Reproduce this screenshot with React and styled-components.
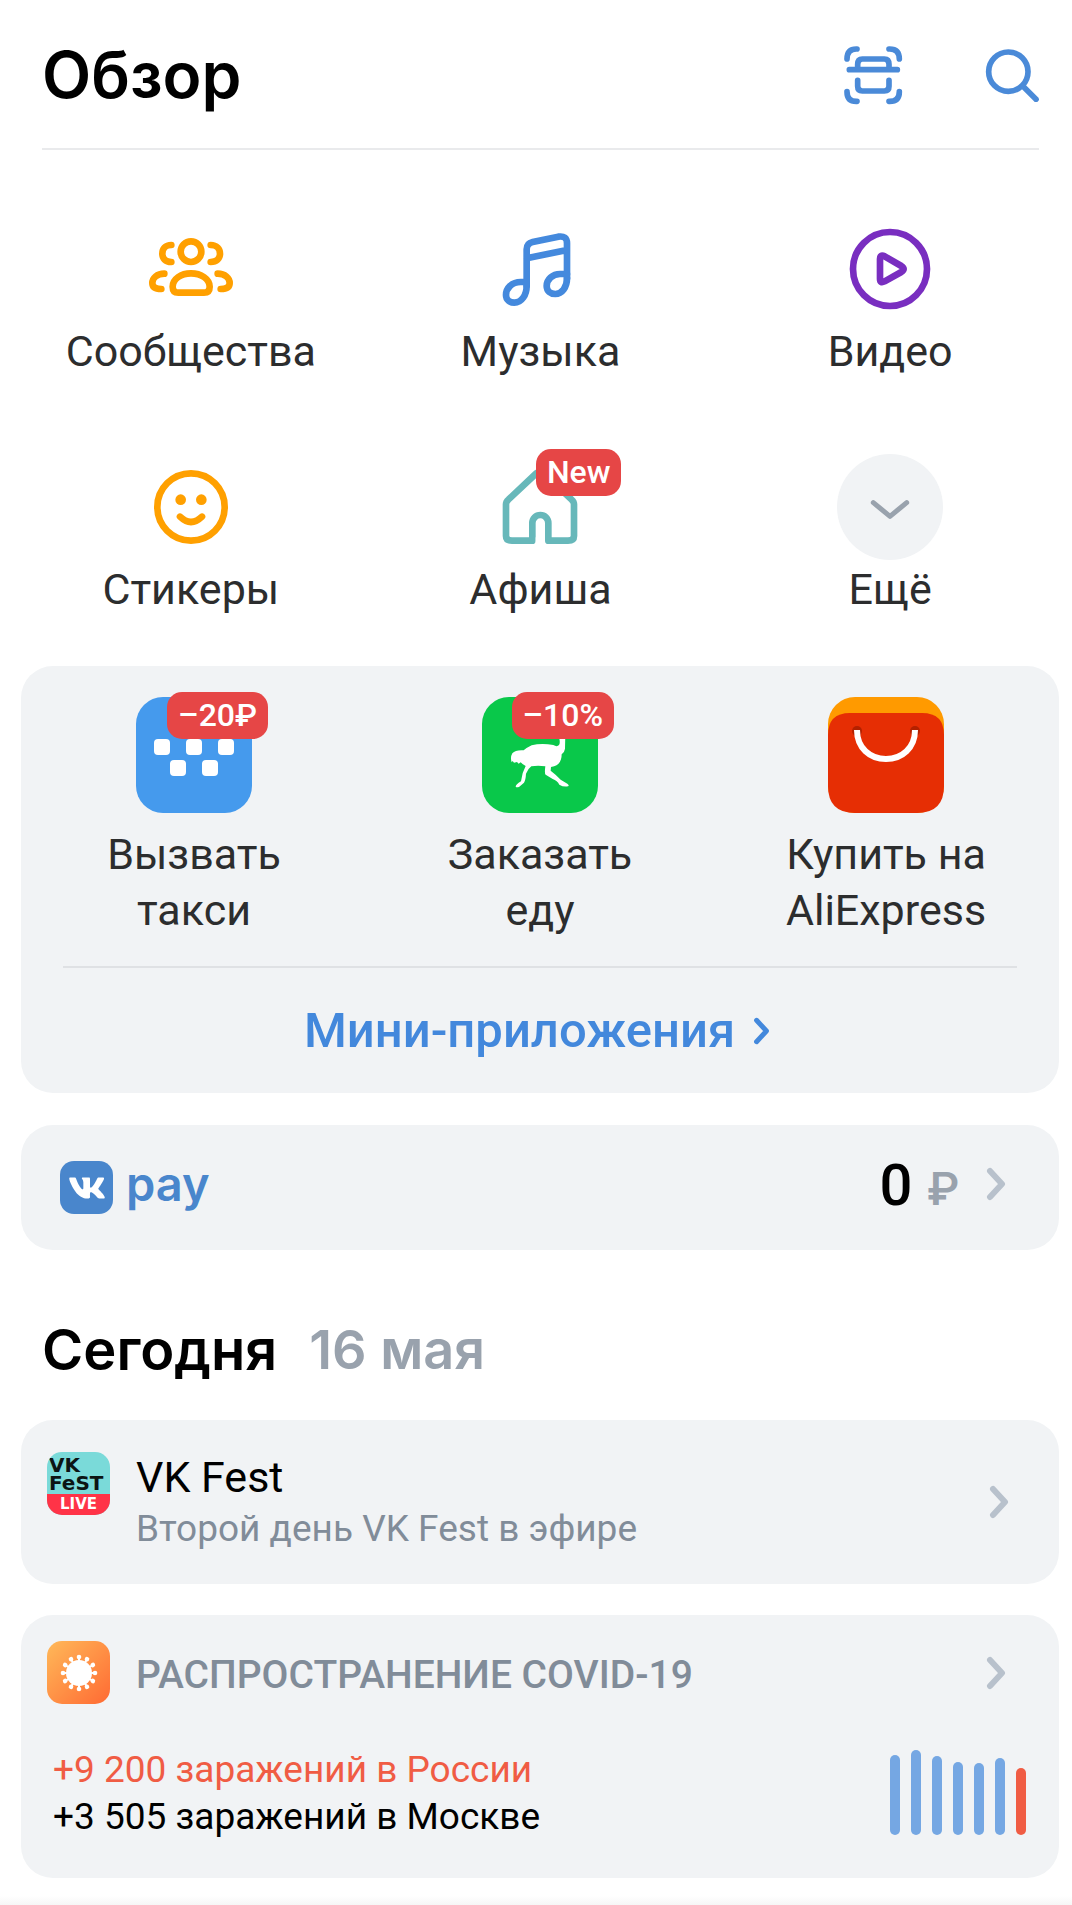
import React from "react";
import styled, { createGlobalStyle } from "styled-components";
import { FaVk } from "react-icons/fa";

const GlobalStyle = createGlobalStyle`
  * {
    box-sizing: border-box;
  }

  body {
    margin: 0;
    background: #ffffff;
    color: #000000;
    font-family: Roboto, "Noto Sans", sans-serif;
  }

  a {
    color: inherit;
    text-decoration: none;
  }
`;

const Page = styled.div`
  padding: 0 13px 28px 21px;
  background: linear-gradient(to top, #f5f5f5, #ffffff 10px);
`;

const Header = styled.header`
  display: flex;
  align-items: center;
  height: 150px;
  margin: 0 20px 0 21px;
  padding-top: 2px;
  border-bottom: 2px solid #e9eaec;
`;

const Title = styled.h1`
  flex: 1;
  margin: 0;
  font: 600 64px/76px Inter, sans-serif;
`;

const IconButton = styled.button`
  display: flex;
  padding: 0;
  margin-left: ${(props) => props.$gap || 0}px;
  border: none;
  background: none;
  color: #4a8ad8;
  cursor: pointer;
`;

const Services = styled.nav`
  display: grid;
  grid-template-columns: repeat(3, 1fr);
  row-gap: 75px;
  margin: 0 -6px 0 -5px;
  padding: 66px 0 49px;
`;

const Service = styled.a`
  display: flex;
  flex-direction: column;
  align-items: center;
  gap: 1px;
`;

const ServiceIcon = styled.span`
  position: relative;
  display: flex;
  align-items: center;
  justify-content: center;
  width: 106px;
  height: 106px;
  border-radius: 50%;
  color: ${(props) => props.$color};
  background: ${(props) => props.$background || "none"};
`;

const Label = styled.span`
  color: #2c2d2e;
  font-size: 43px;
  line-height: 56px;
  text-align: center;
`;

const Badge = styled.span`
  position: absolute;
  top: -5px;
  right: ${(props) => props.$right || -16}px;
  height: 47px;
  padding: 0 11px;
  border-radius: 15px;
  background: #e64646;
  color: #ffffff;
  font-size: 32px;
  font-weight: 500;
  line-height: 47px;
  white-space: nowrap;
`;

const Card = styled.section`
  border-radius: 32px;
  background: #f1f3f5;
`;

const Apps = styled.div`
  display: grid;
  grid-template-columns: repeat(3, 1fr);
  padding: 31px 0 28px;
`;

const AppLink = styled.a`
  display: flex;
  flex-direction: column;
  align-items: center;
  gap: 13px;
`;

const AppIcon = styled.span`
  position: relative;
  width: 116px;
  height: 116px;
`;

const AppLabel = styled(Label)`
  max-width: 220px;
`;

const AllApps = styled.a`
  display: flex;
  align-items: center;
  justify-content: center;
  gap: 18px;
  height: 127px;
  margin: 0 42px;
  padding-right: 6px;
  border-top: 2px solid #dfe1e4;
  && {
    color: #4388dc;
  }
  font-size: 49px;
  font-weight: 500;
`;

const PayCard = styled(Card)`
  margin-top: 32px;
`;

const PayLink = styled.a`
  display: flex;
  align-items: center;
  height: 125px;
  padding: 0 53px 8px 39px;
`;

const PayLogo = styled.span`
  display: flex;
  align-items: center;
  justify-content: center;
  width: 53px;
  height: 53px;
  margin-top: 8px;
  border-radius: 14px;
  background: #4986cc;
  color: #ffffff;
`;

const PayName = styled.span`
  flex: 1;
  padding-left: 13px;
  color: #4986cc;
  font: 600 47px/56px Inter, sans-serif;
`;

const Balance = styled.span`
  display: flex;
  align-items: baseline;
  gap: 15px;
  margin-right: 27px;
  padding-top: 3px;
  font-size: 58px;
  font-weight: 500;
`;

const Currency = styled.span`
  color: #99a2ad;
  font-size: 46px;
`;

const Today = styled.h2`
  display: flex;
  gap: 32px;
  margin: 64px 21px 34px;
  font: 600 56px/72px Inter, sans-serif;
`;

const TodayDate = styled.span`
  color: #99a2ad;
  font-size: 54px;
`;

const FestLink = styled.a`
  display: flex;
  align-items: center;
  height: 164px;
  padding: 0 50px 0 26px;
`;

const FestLogo = styled.span`
  display: flex;
  flex-direction: column;
  align-self: flex-start;
  width: 63px;
  height: 63px;
  margin-top: 32px;
  padding-top: 4px;
  border-radius: 15px;
  overflow: hidden;
  background: #7adad9;
  color: #0c1414;
  font: 700 20px/18px "DejaVu Sans", sans-serif;
`;

const FestName = styled.span`
  padding-left: 2px;
`;

const FestLive = styled.span`
  flex: 1;
  margin-top: 2px;
  background: #ff3347;
  color: #ffffff;
  font-size: 15px;
  line-height: 21px;
  text-align: center;
`;

const FestText = styled.span`
  flex: 1;
  display: flex;
  flex-direction: column;
  padding-left: 26px;
`;

const FestTitle = styled.span`
  font-size: 43px;
  line-height: 54px;
`;

const FestSubtitle = styled.span`
  color: #818c99;
  font-size: 37px;
  line-height: 50px;
`;

const CovidCard = styled(Card)`
  margin-top: 31px;
  padding: 26px 33px 38px 26px;
`;

const CovidHeader = styled.a`
  display: flex;
  align-items: center;
  padding-right: 20px;
`;

const CovidTitle = styled.h3`
  flex: 1;
  margin: 0;
  padding: 4px 0 0 26px;
  color: #818c99;
  font-size: 39px;
  font-weight: 500;
  line-height: 48px;
  text-transform: uppercase;
`;

const CovidBody = styled.div`
  display: flex;
  align-items: flex-end;
  justify-content: space-between;
  padding: 42px 0 0 6px;
`;

const Stat = styled.p`
  margin: 0;
  color: ${(props) => props.$color};
  font-size: 37px;
  line-height: 47px;
`;

const Chart = styled.div`
  display: flex;
  align-items: flex-end;
  gap: 11px;
  padding-bottom: 5px;
`;

const Bar = styled.span`
  width: 10px;
  border-radius: 5px;
  background: ${(props) => (props.$last ? "#f05c44" : "#75a7e3")};
`;

const Stroke = ({ size = 100, box = 300, width = 20, children }) => (
  <svg
    width={size}
    height={size}
    viewBox={`0 0 ${box} ${box}`}
    fill="none"
    stroke="currentColor"
    strokeWidth={width}
    strokeLinecap="round"
    strokeLinejoin="round"
    aria-hidden="true"
  >
    {children}
  </svg>
);

const Chevron = ({ color = "#b8c1cc", small }) => (
  <svg
    width={small ? 17 : 20}
    height={small ? 28 : 34}
    viewBox="0 0 20 34"
    fill="none"
    stroke={color}
    strokeWidth="6"
    strokeLinecap="round"
    strokeLinejoin="round"
    aria-hidden="true"
  >
    <path d="M4 4 16 17 4 30" />
  </svg>
);

const ScanIcon = () => (
  <Stroke size={60} box={180} width={17}>
    <path d="M42 12h-2Q12 12 12 42M138 12h2q29 0 29 30M12 140q0 29 28 29h2M169 140q0 29-29 29h-2" />
    <path d="M44 74V58q0-16 14-16h66q14 0 14 16v16M19 74h144M44 106v18q0 14 14 14h66q14 0 14-14v-18" />
  </Stroke>
);

const SearchIcon = () => (
  <Stroke size={54} box={162} width={17}>
    <circle cx="70" cy="71" r="59" />
    <path d="M114 115 153 154" />
  </Stroke>
);

const CommunitiesIcon = () => (
  <Stroke>
    <circle cx="150" cy="98" r="31" />
    <path d="M112 221Q95 221 95 203C95 180 120 163 150 163S206 180 206 203Q206 221 189 221Z" />
    <path d="M91 78C73 78 64 90 64 104S73 129 91 129M209 78C227 78 237 90 237 104S227 129 209 129" />
    <path d="M70 164C48 164 34 177 34 192C34 203 42 210 61 210M230 164C252 164 266 177 266 192C266 203 258 210 239 210" />
  </Stroke>
);

const MusicIcon = () => (
  <Stroke>
    <path d="M110 200V91Q110 73 128 69L205 53Q231 49 231 73V178M110 118 231 93" />
    <path d="M110 189H92C65 189 48 208 48 228C48 243 60 251 73 251C95 251 110 228 110 200" />
    <path d="M231 165H210C188 165 170 181 170 201C170 216 182 225 196 225C216 225 231 205 231 178" />
  </Stroke>
);

const VideoIcon = () => (
  <Stroke>
    <circle cx="150" cy="150" r="111" />
    <path d="M120 120Q120 105 134 112L184 141Q198 150 184 159L134 187Q120 194 120 180Z" />
  </Stroke>
);

const StickersIcon = () => (
  <Stroke>
    <circle cx="150" cy="150" r="101" />
    <circle cx="119" cy="128" r="16" fill="currentColor" stroke="none" />
    <circle cx="181" cy="128" r="16" fill="currentColor" stroke="none" />
    <path d="M117 179Q150 211 183 179" />
  </Stroke>
);

const AfishaIcon = () => (
  <Stroke>
    <path d="M127 251H66Q48 251 48 237V142Q48 134 55 128L140 48Q150 40 160 48L245 128Q252 134 252 142V237Q252 251 234 251H175V198A24 24 0 0 0 127 198Z" />
    <path d="M137 252h28" stroke="#ffffff" strokeWidth="22" strokeLinecap="butt" />
  </Stroke>
);

const MoreIcon = () => (
  <Stroke width={15}>
    <path d="M100 137 150 178 200 137" />
  </Stroke>
);

const TaxiIcon = () => (
  <svg width="116" height="116" viewBox="0 0 116 116" aria-hidden="true">
    <rect width="116" height="116" rx="27" fill="#459aed" />
    <g fill="#ffffff">
      <rect x="18" y="42" width="16" height="16" rx="4" />
      <rect x="50" y="42" width="16" height="16" rx="4" />
      <rect x="82" y="42" width="16" height="16" rx="4" />
      <rect x="34" y="63" width="16" height="16" rx="4" />
      <rect x="66" y="63" width="16" height="16" rx="4" />
    </g>
  </svg>
);

const FoodIcon = () => (
  <svg width="116" height="116" viewBox="0 0 348 348" aria-hidden="true">
    <rect width="348" height="348" rx="81" fill="#09c84a" />
    <path
      fill="#ffffff"
      d="M232 112L250 112L249 155Q248 165 239 172C239 190 233 206 207 210L206 221Q222 233 236 248L256 260Q263 265 258 268Q245 271 232 263Q226 251 212 246L191 233Q187 230 190 208Q168 204 148 208Q137 216 132 230Q131 249 126 257L112 269Q104 273 101 269Q101 263 117 253Q119 229 131 207Q122 203 116 196L110 200L105 195L96 197L92 192L89 196Q84 181 91 169Q101 158 125 160Q136 151 149 145Q178 137 214 144Q225 151 231 144Q235 138 232 125Z"
    />
  </svg>
);

const AliIcon = () => (
  <svg width="116" height="116" viewBox="0 0 116 116" aria-hidden="true">
    <rect width="116" height="116" rx="27" fill="#ff9a00" />
    <path
      fill="#e62e04"
      d="M0 38Q0 16 22 16H94Q116 16 116 38V89Q116 116 89 116H27Q0 116 0 89Z"
    />
    <circle cx="29" cy="34" r="5" fill="#b32100" />
    <circle cx="87" cy="34" r="5" fill="#b32100" />
    <path d="M29 33C29 51 42 62 58 62S87 51 87 33" fill="none" stroke="#ffffff" strokeWidth="6" />
  </svg>
);

const VirusIcon = () => (
  <svg width="63" height="63" viewBox="0 0 63 63" aria-hidden="true">
    <defs>
      <linearGradient id="virus" x1="0" y1="0" x2="1" y2="1">
        <stop offset="0" stopColor="#ffb959" />
        <stop offset="1" stopColor="#ff6a33" />
      </linearGradient>
    </defs>
    <rect width="63" height="63" rx="15" fill="url(#virus)" />
    <circle cx="32" cy="32" r="13" fill="#ffffff" />
    {[...Array(12).keys()].map((i) => (
      <g key={i} transform={`rotate(${i * 30} 32 32)`} fill="#ffffff">
        <rect x="31" y="16" width="2" height="6" />
        <circle cx="32" cy="16" r="2.3" />
      </g>
    ))}
  </svg>
);

const services = [
  { name: "Сообщества", icon: <CommunitiesIcon />, color: "#ffa000" },
  { name: "Музыка", icon: <MusicIcon />, color: "#4489dd" },
  { name: "Видео", icon: <VideoIcon />, color: "#792ec0" },
  { name: "Стикеры", icon: <StickersIcon />, color: "#ffa000" },
  { name: "Афиша", icon: <AfishaIcon />, color: "#67b8ba", badge: "New" },
  { name: "Ещё", icon: <MoreIcon />, color: "#99a2ad", background: "#f1f3f5" },
];

const apps = [
  { name: "Вызвать такси", icon: <TaxiIcon />, badge: "–20₽" },
  { name: "Заказать еду", icon: <FoodIcon />, badge: "–10%" },
  { name: "Купить на AliExpress", icon: <AliIcon /> },
];

const cases = [80, 85, 79, 73, 72, 77, 67];

const App = () => {
  return (
    <>
      <GlobalStyle />
      <Page>
        <Header>
          <Title>Обзор</Title>
          <IconButton type="button" aria-label="Сканер">
            <ScanIcon />
          </IconButton>
          <IconButton type="button" aria-label="Поиск" $gap={82}>
            <SearchIcon />
          </IconButton>
        </Header>

        <Services>
          {services.map((item) => (
            <Service key={item.name} href="#">
              <ServiceIcon $color={item.color} $background={item.background}>
                {item.icon}
                {item.badge && <Badge $right={-28}>{item.badge}</Badge>}
              </ServiceIcon>
              <Label>{item.name}</Label>
            </Service>
          ))}
        </Services>

        <Card>
          <Apps>
            {apps.map((item) => (
              <AppLink key={item.name} href="#">
                <AppIcon>
                  {item.icon}
                  {item.badge && <Badge>{item.badge}</Badge>}
                </AppIcon>
                <AppLabel>{item.name}</AppLabel>
              </AppLink>
            ))}
          </Apps>
          <AllApps href="#">
            Мини-приложения
            <Chevron small color="#4388dc" />
          </AllApps>
        </Card>

        <PayCard>
          <PayLink href="#">
            <PayLogo>
              <FaVk size={38} />
            </PayLogo>
            <PayName>pay</PayName>
            <Balance>
              0<Currency>₽</Currency>
            </Balance>
            <Chevron />
          </PayLink>
        </PayCard>

        <Today>
          Сегодня
          <TodayDate>16 мая</TodayDate>
        </Today>

        <Card>
          <FestLink href="#">
            <FestLogo>
              <FestName>
                VK
                <br />
                FeST
              </FestName>
              <FestLive>LIVE</FestLive>
            </FestLogo>
            <FestText>
              <FestTitle>VK Fest</FestTitle>
              <FestSubtitle>Второй день VK Fest в эфире</FestSubtitle>
            </FestText>
            <Chevron />
          </FestLink>
        </Card>

        <CovidCard>
          <CovidHeader href="#">
            <VirusIcon />
            <CovidTitle>Распространение COVID-19</CovidTitle>
            <Chevron />
          </CovidHeader>
          <CovidBody>
            <div>
              <Stat $color="#f05c44">+9 200 заражений в России</Stat>
              <Stat $color="#000000">+3 505 заражений в Москве</Stat>
            </div>
            <Chart>
              {cases.map((value, index) => (
                <Bar
                  key={index}
                  $last={index === cases.length - 1}
                  style={{ height: value }}
                />
              ))}
            </Chart>
          </CovidBody>
        </CovidCard>
      </Page>
    </>
  );
};

export default App;
